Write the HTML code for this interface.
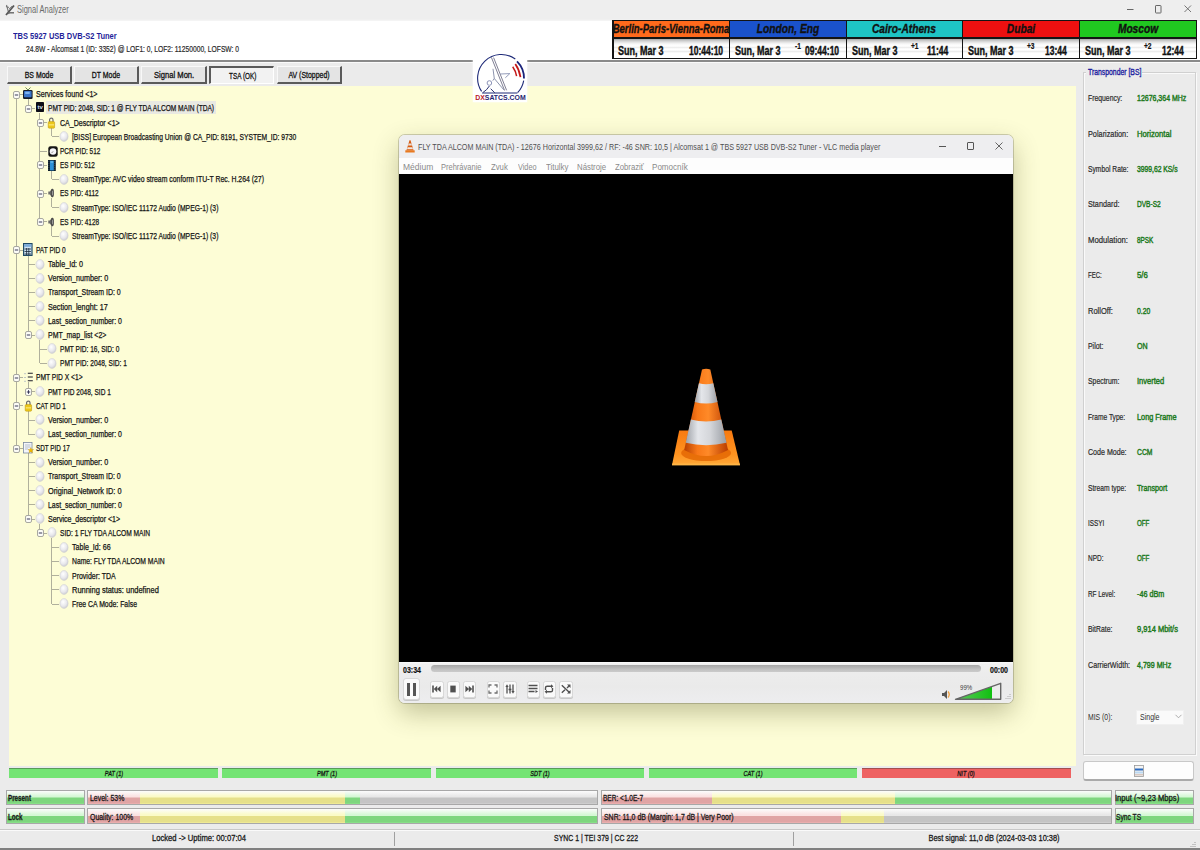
<!DOCTYPE html><html><head><meta charset="utf-8"><title>Signal Analyzer</title><style>

*{box-sizing:border-box;margin:0;padding:0}
html,body{width:1200px;height:850px;overflow:hidden;background:#ebebeb;font-family:"Liberation Sans",sans-serif;position:relative;color:#111}
.a{position:absolute}
.t{position:absolute;white-space:nowrap;transform-origin:0 0;line-height:1}
svg{position:absolute;overflow:visible}
#title{left:0;top:0;width:1200px;height:21px;background:linear-gradient(#eeeeee 0,#eeeeee 19px,#f6f6f6 21px)}
#hdr{left:0;top:21px;width:1200px;height:39px;background:#fff}
#hline{left:0;top:60px;width:1200px;height:2px;background:#8a8a8a}
#hwhite{left:0;top:62px;width:1200px;height:1px;background:#fafafa}
.btn{position:absolute;top:66px;height:17.5px;background:#e4e4e4;border-right:2px solid #5a5a5a;border-bottom:2px solid #5a5a5a;border-top:1px solid #f8f8f8;border-left:1px solid #f8f8f8}
.btn.sel{background:#f2f2f2;border-left:2px solid #5a5a5a;border-top:2px solid #5a5a5a;border-right:1px solid #fff;border-bottom:1px solid #fff}
.btn span{position:absolute;left:0;right:0;top:4px;text-align:center;font-size:9px;line-height:1;white-space:nowrap;transform:scaleX(.77);color:#111;-webkit-text-stroke:.3px #111}
#tree{left:9px;top:85.5px;width:1066.5px;height:680.5px;background:#fdfdd6}
.clkbox{position:absolute;left:612px;top:20px;width:584.5px;height:38.6px;background:#141414}
.clk{position:absolute;top:1px;height:36.6px;overflow:hidden}
.clk .h{position:absolute;left:0;top:0;right:0;height:16px}
.clk .h span{position:absolute;left:50%;top:2.3px;font:italic bold 12px "Liberation Sans",sans-serif;line-height:12px;transform-origin:50% 0;transform:translateX(-50%) scaleX(.85);white-space:nowrap;color:#111;-webkit-text-stroke:.35px #111}
.clk .d{position:absolute;left:0;top:17.5px;right:0;bottom:0;background:linear-gradient(#a8a8a8 0,#c8c8c8 1.5px,#e0e0e0 3px,#f8f8f8 5px,#fff 7px,#eee 8.5px,#fff 10px,#fff 11px,#ececec 12.5px,#fff 14px,#fff 100%)}
.clk .d span{position:absolute;top:6.6px;font:bold 12px "Liberation Sans",sans-serif;line-height:12px;transform-origin:0 0;white-space:nowrap;color:#111;-webkit-text-stroke:.4px #111}
.clk .d sup{position:absolute;top:3.4px;font:bold 8.5px "Liberation Sans",sans-serif;line-height:9px;transform-origin:0 0;transform:scaleX(.78);color:#111;-webkit-text-stroke:.2px #111}

</style></head><body>

<div id="title" class="a"></div>
<svg style="left:5px;top:2.5px" width="10" height="12" viewBox="0 0 10 12">
 <path d="M1.5 2 L4 11 M1 3.5 L4 4.5" stroke="#777" stroke-width="1.1" fill="none"/>
 <path d="M1 12 L9 2.5" stroke="#555" stroke-width="1.8" fill="none"/>
 <path d="M3 9.8 H9" stroke="#666" stroke-width="1.4" fill="none"/>
 <path d="M4 6 L7 3" stroke="#888" stroke-width="1" fill="none"/>
</svg>
<div class="t" style="left:17px;top:3.6px;font-size:10.5px;color:#6a6a6a;transform:scaleX(.715)">Signal Analyzer</div>
<svg style="left:1127px;top:8.5px" width="8" height="2"><rect x="0" y="0" width="6.5" height="1" fill="#666"/></svg>
<svg style="left:1155px;top:4.5px" width="8" height="9"><rect x="0.5" y="0.5" width="5.5" height="7.5" rx=".6" fill="none" stroke="#666" stroke-width="1"/></svg>
<svg style="left:1183.5px;top:4.5px" width="9" height="9"><path d="M0.5 0.5 L7 7 M7 0.5 L0.5 7" stroke="#666" stroke-width=".9" fill="none"/></svg>
<div id="hdr" class="a"></div>
<div class="t" style="left:13px;top:30.5px;font-size:9.5px;font-weight:bold;color:#1f1f9a;transform:scaleX(.79)">TBS 5927 USB DVB-S2 Tuner</div>
<div class="t" style="left:26px;top:45px;font-size:9px;color:#2a2a2a;transform:scaleX(.745);-webkit-text-stroke:.2px #2a2a2a">24.8W - Alcomsat 1 (ID: 3352) @ LOF1: 0, LOF2: 11250000, LOFSW: 0</div>
<div id="hline" class="a"></div>
<div id="hwhite" class="a"></div>
<div class="btn" style="left:7px;width:65px"><span>BS Mode</span></div>
<div class="btn" style="left:74px;width:65px"><span>DT Mode</span></div>
<div class="btn" style="left:141px;width:66px"><span style="transform:translateX(.6px) scaleX(.847)">Signal Mon.</span></div>
<div class="btn sel" style="left:209px;width:65px"><span style="top:3.8px;transform:translateX(.8px) scaleX(.71)">TSA (OK)</span></div>
<div class="btn" style="left:277px;width:65px"><span>AV (Stopped)</span></div>

<div class="clkbox">
<div class="clk" style="left:1.5px;width:115.0px"><div class="h" style="background:#ff6a1c"><span style="transform:translateX(-50%) scaleX(.79)">Berlin-Paris-Vienna-Roma</span></div><div class="d"><span style="left:4.5px;transform:scaleX(.75)">Sun, Mar 3</span><span style="left:75.5px;transform:scaleX(.71)">10:44:10</span></div></div>
<div class="clk" style="left:118.0px;width:115.5px"><div class="h" style="background:#1a52cc"><span>London, Eng</span></div><div class="d"><span style="left:4.5px;transform:scaleX(.75)">Sun, Mar 3</span><sup style="left:64.5px">-1</sup><span style="left:74.5px;transform:scaleX(.71)">09:44:10</span></div></div>
<div class="clk" style="left:235.0px;width:114.5px"><div class="h" style="background:#1ec4c4"><span>Cairo-Athens</span></div><div class="d"><span style="left:4.5px;transform:scaleX(.75)">Sun, Mar 3</span><sup style="left:63.5px">+1</sup><span style="left:80.0px;transform:scaleX(.71)">11:44</span></div></div>
<div class="clk" style="left:351.0px;width:115.5px"><div class="h" style="background:#ee1010"><span>Dubai</span></div><div class="d"><span style="left:4.5px;transform:scaleX(.75)">Sun, Mar 3</span><sup style="left:63.5px">+3</sup><span style="left:81.5px;transform:scaleX(.71)">13:44</span></div></div>
<div class="clk" style="left:468.0px;width:115.5px"><div class="h" style="background:#20c820"><span>Moscow</span></div><div class="d"><span style="left:4.5px;transform:scaleX(.75)">Sun, Mar 3</span><sup style="left:63.5px">+2</sup><span style="left:81.5px;transform:scaleX(.71)">12:44</span></div></div>
</div>
<div id="tree" class="a"></div>
<div class="a" style="left:1083px;top:72px;width:113px;height:683px;border:1px solid #d0d0d0;box-shadow:inset 1px 1px 0 #fafafa,1px 1px 0 #fafafa"></div>
<div class="a" style="left:1086px;top:67px;width:56px;height:10px;background:#ebebeb"></div>
<div class="t" style="left:1088px;top:67.7px;font-size:9px;color:#1c1ca0;transform:scaleX(.76);-webkit-text-stroke:.35px #1c1ca0">Transponder [BS]</div>
<div class="t" style="left:1088px;top:94.30px;font-size:9px;color:#2a2a2a;transform:scaleX(0.76);-webkit-text-stroke:.2px #2a2a2a">Frequency:</div>
<div class="t" style="left:1137px;top:94.30px;font-size:9px;color:#1d7a1d;transform:scaleX(0.776);-webkit-text-stroke:.45px #1d7a1d">12676,364 MHz</div>
<div class="t" style="left:1088px;top:129.69px;font-size:9px;color:#2a2a2a;transform:scaleX(0.812);-webkit-text-stroke:.2px #2a2a2a">Polarization:</div>
<div class="t" style="left:1137px;top:129.69px;font-size:9px;color:#1d7a1d;transform:scaleX(0.849);-webkit-text-stroke:.45px #1d7a1d">Horizontal</div>
<div class="t" style="left:1088px;top:165.08px;font-size:9px;color:#2a2a2a;transform:scaleX(0.747);-webkit-text-stroke:.2px #2a2a2a">Symbol Rate:</div>
<div class="t" style="left:1137px;top:165.08px;font-size:9px;color:#1d7a1d;transform:scaleX(0.752);-webkit-text-stroke:.45px #1d7a1d">3999,62 KS/s</div>
<div class="t" style="left:1088px;top:200.47px;font-size:9px;color:#2a2a2a;transform:scaleX(0.807);-webkit-text-stroke:.2px #2a2a2a">Standard:</div>
<div class="t" style="left:1137px;top:200.47px;font-size:9px;color:#1d7a1d;transform:scaleX(0.727);-webkit-text-stroke:.45px #1d7a1d">DVB-S2</div>
<div class="t" style="left:1088px;top:235.86px;font-size:9px;color:#2a2a2a;transform:scaleX(0.858);-webkit-text-stroke:.2px #2a2a2a">Modulation:</div>
<div class="t" style="left:1137px;top:235.86px;font-size:9px;color:#1d7a1d;transform:scaleX(0.71);-webkit-text-stroke:.45px #1d7a1d">8PSK</div>
<div class="t" style="left:1088px;top:271.25px;font-size:9px;color:#2a2a2a;transform:scaleX(0.669);-webkit-text-stroke:.2px #2a2a2a">FEC:</div>
<div class="t" style="left:1137px;top:271.25px;font-size:9px;color:#1d7a1d;transform:scaleX(0.862);-webkit-text-stroke:.45px #1d7a1d">5/6</div>
<div class="t" style="left:1088px;top:306.64px;font-size:9px;color:#2a2a2a;transform:scaleX(0.836);-webkit-text-stroke:.2px #2a2a2a">RollOff:</div>
<div class="t" style="left:1137px;top:306.64px;font-size:9px;color:#1d7a1d;transform:scaleX(0.754);-webkit-text-stroke:.45px #1d7a1d">0.20</div>
<div class="t" style="left:1088px;top:342.03px;font-size:9px;color:#2a2a2a;transform:scaleX(0.77);-webkit-text-stroke:.2px #2a2a2a">Pilot:</div>
<div class="t" style="left:1137px;top:342.03px;font-size:9px;color:#1d7a1d;transform:scaleX(0.785);-webkit-text-stroke:.45px #1d7a1d">ON</div>
<div class="t" style="left:1088px;top:377.42px;font-size:9px;color:#2a2a2a;transform:scaleX(0.765);-webkit-text-stroke:.2px #2a2a2a">Spectrum:</div>
<div class="t" style="left:1137px;top:377.42px;font-size:9px;color:#1d7a1d;transform:scaleX(0.835);-webkit-text-stroke:.45px #1d7a1d">Inverted</div>
<div class="t" style="left:1088px;top:412.81px;font-size:9px;color:#2a2a2a;transform:scaleX(0.738);-webkit-text-stroke:.2px #2a2a2a">Frame Type:</div>
<div class="t" style="left:1137px;top:412.81px;font-size:9px;color:#1d7a1d;transform:scaleX(0.814);-webkit-text-stroke:.45px #1d7a1d">Long Frame</div>
<div class="t" style="left:1088px;top:448.20px;font-size:9px;color:#2a2a2a;transform:scaleX(0.787);-webkit-text-stroke:.2px #2a2a2a">Code Mode:</div>
<div class="t" style="left:1137px;top:448.20px;font-size:9px;color:#1d7a1d;transform:scaleX(0.751);-webkit-text-stroke:.45px #1d7a1d">CCM</div>
<div class="t" style="left:1088px;top:483.59px;font-size:9px;color:#2a2a2a;transform:scaleX(0.746);-webkit-text-stroke:.2px #2a2a2a">Stream type:</div>
<div class="t" style="left:1137px;top:483.59px;font-size:9px;color:#1d7a1d;transform:scaleX(0.793);-webkit-text-stroke:.45px #1d7a1d">Transport</div>
<div class="t" style="left:1088px;top:518.98px;font-size:9px;color:#2a2a2a;transform:scaleX(0.709);-webkit-text-stroke:.2px #2a2a2a">ISSYI</div>
<div class="t" style="left:1137px;top:518.98px;font-size:9px;color:#1d7a1d;transform:scaleX(0.688);-webkit-text-stroke:.45px #1d7a1d">OFF</div>
<div class="t" style="left:1088px;top:554.37px;font-size:9px;color:#2a2a2a;transform:scaleX(0.722);-webkit-text-stroke:.2px #2a2a2a">NPD:</div>
<div class="t" style="left:1137px;top:554.37px;font-size:9px;color:#1d7a1d;transform:scaleX(0.688);-webkit-text-stroke:.45px #1d7a1d">OFF</div>
<div class="t" style="left:1088px;top:589.76px;font-size:9px;color:#2a2a2a;transform:scaleX(0.708);-webkit-text-stroke:.2px #2a2a2a">RF Level:</div>
<div class="t" style="left:1137px;top:589.76px;font-size:9px;color:#1d7a1d;transform:scaleX(0.802);-webkit-text-stroke:.45px #1d7a1d">-46 dBm</div>
<div class="t" style="left:1088px;top:625.15px;font-size:9px;color:#2a2a2a;transform:scaleX(0.76);-webkit-text-stroke:.2px #2a2a2a">BitRate:</div>
<div class="t" style="left:1137px;top:625.15px;font-size:9px;color:#1d7a1d;transform:scaleX(0.835);-webkit-text-stroke:.45px #1d7a1d">9,914 Mbit/s</div>
<div class="t" style="left:1088px;top:660.54px;font-size:9px;color:#2a2a2a;transform:scaleX(0.794);-webkit-text-stroke:.2px #2a2a2a">CarrierWidth:</div>
<div class="t" style="left:1137px;top:660.54px;font-size:9px;color:#1d7a1d;transform:scaleX(0.786);-webkit-text-stroke:.45px #1d7a1d">4,799 MHz</div>
<div class="t" style="left:1088px;top:712.5px;font-size:9px;color:#303030;transform:scaleX(.76)">MIS (0):</div>
<div class="a" style="left:1136px;top:709.5px;width:47.5px;height:15px;background:#fafafa;border:1px solid #f0f0f0"></div>
<div class="t" style="left:1139.5px;top:712.5px;font-size:9px;color:#333;transform:scaleX(.78)">Single</div>
<svg style="left:1175px;top:714px" width="7" height="5" viewBox="0 0 7 5"><path d="M0.5 0.8 L3.5 3.8 L6.5 0.8" stroke="#999" stroke-width=".8" fill="none"/></svg>
<div class="a" style="left:1082.5px;top:761px;width:111.5px;height:20px;background:#fdfdfd;border:1px solid #c8c8c8;border-bottom:2px solid #aaa;border-radius:3px"></div>
<svg style="left:1134px;top:765px" width="10" height="12" viewBox="0 0 10 12"><rect x=".5" y=".5" width="9" height="11" fill="#f4f4f4" stroke="#999" stroke-width=".8"/><rect x="1" y="3.5" width="8" height="2" fill="#2a6ac0"/><rect x="1" y="6.5" width="8" height="2" fill="#bcd8f0"/><rect x="1" y="9" width="8" height="1.5" fill="#d8c8c0"/></svg>
<div class="a" style="left:9px;top:768px;width:209px;height:10px;background:#74e474;border-top:1px solid #5a9a5a"></div>
<div class="t" style="left:113.5px;top:770.3px;font-size:7.5px;font-style:italic;color:#111;transform-origin:50% 0;transform:translateX(-50%) scaleX(.74);-webkit-text-stroke:.3px #111">PAT (1)</div>
<div class="a" style="left:222px;top:768px;width:209px;height:10px;background:#74e474;border-top:1px solid #5a9a5a"></div>
<div class="t" style="left:326.5px;top:770.3px;font-size:7.5px;font-style:italic;color:#111;transform-origin:50% 0;transform:translateX(-50%) scaleX(.74);-webkit-text-stroke:.3px #111">PMT (1)</div>
<div class="a" style="left:436px;top:768px;width:208px;height:10px;background:#74e474;border-top:1px solid #5a9a5a"></div>
<div class="t" style="left:540.0px;top:770.3px;font-size:7.5px;font-style:italic;color:#111;transform-origin:50% 0;transform:translateX(-50%) scaleX(.74);-webkit-text-stroke:.3px #111">SDT (1)</div>
<div class="a" style="left:649px;top:768px;width:208px;height:10px;background:#74e474;border-top:1px solid #5a9a5a"></div>
<div class="t" style="left:753.0px;top:770.3px;font-size:7.5px;font-style:italic;color:#111;transform-origin:50% 0;transform:translateX(-50%) scaleX(.74);-webkit-text-stroke:.3px #111">CAT (1)</div>
<div class="a" style="left:862px;top:768px;width:208.5px;height:10px;background:#ee6262;border-top:1px solid #a05050"></div>
<div class="t" style="left:966.25px;top:770.3px;font-size:7.5px;font-style:italic;color:#111;transform-origin:50% 0;transform:translateX(-50%) scaleX(.74);-webkit-text-stroke:.3px #111">NIT (0)</div>
<div class="a" style="left:6px;top:789.5px;width:78.5px;height:15.0px;border:1px solid #a8a8a8;background:#ddd;overflow:hidden">
<div class="a" style="left:0px;top:0;width:78.5px;height:100%;background:linear-gradient(#fcfcfc 0,#d6f8d6 40%,#d6f8d6 47%,#7ed67e 53%,#7ed67e 90%,#8ce48c 100%)"></div>
</div>
<div class="t" style="left:8px;top:794.2px;font-size:9px;font-weight:bold;color:#1a1a1a;transform:scaleX(0.696);-webkit-text-stroke:.3px #1a1a1a">Present</div>
<div class="a" style="left:6px;top:808px;width:78.5px;height:15.5px;border:1px solid #a8a8a8;background:#ddd;overflow:hidden">
<div class="a" style="left:0px;top:0;width:78.5px;height:100%;background:linear-gradient(#fcfcfc 0,#d6f8d6 40%,#d6f8d6 47%,#7ed67e 53%,#7ed67e 90%,#8ce48c 100%)"></div>
</div>
<div class="t" style="left:8px;top:813.0px;font-size:9px;font-weight:bold;color:#1a1a1a;transform:scaleX(0.693);-webkit-text-stroke:.3px #1a1a1a">Lock</div>
<div class="a" style="left:87px;top:789.5px;width:511px;height:15.0px;border:1px solid #a8a8a8;background:#ddd;overflow:hidden">
<div class="a" style="left:0px;top:0;width:52px;height:100%;background:linear-gradient(#fcfcfc 0,#fbe2e2 40%,#fbe2e2 47%,#e0a4a4 53%,#e0a4a4 90%,#eeb2b2 100%)"></div>
<div class="a" style="left:52px;top:0;width:204.5px;height:100%;background:linear-gradient(#fcfcfc 0,#fbfbc8 40%,#fbfbc8 47%,#e6e08a 53%,#e6e08a 90%,#f4ee98 100%)"></div>
<div class="a" style="left:256.5px;top:0;width:15.5px;height:100%;background:linear-gradient(#fcfcfc 0,#d6f8d6 40%,#d6f8d6 47%,#7ed67e 53%,#7ed67e 90%,#8ce48c 100%)"></div>
<div class="a" style="left:272.0px;top:0;width:239.0px;height:100%;background:linear-gradient(#fcfcfc 0,#e8e8e8 40%,#e8e8e8 47%,#c4c4c4 53%,#c4c4c4 90%,#d2d2d2 100%)"></div>
</div>
<div class="t" style="left:90px;top:794.2px;font-size:9px;color:#1a1a1a;transform:scaleX(0.77);-webkit-text-stroke:.3px #1a1a1a">Level: 53%</div>
<div class="a" style="left:87px;top:808px;width:511px;height:15.5px;border:1px solid #a8a8a8;background:#ddd;overflow:hidden">
<div class="a" style="left:0px;top:0;width:52px;height:100%;background:linear-gradient(#fcfcfc 0,#fbe2e2 40%,#fbe2e2 47%,#e0a4a4 53%,#e0a4a4 90%,#eeb2b2 100%)"></div>
<div class="a" style="left:52px;top:0;width:204.5px;height:100%;background:linear-gradient(#fcfcfc 0,#fbfbc8 40%,#fbfbc8 47%,#e6e08a 53%,#e6e08a 90%,#f4ee98 100%)"></div>
<div class="a" style="left:256.5px;top:0;width:254.5px;height:100%;background:linear-gradient(#fcfcfc 0,#d6f8d6 40%,#d6f8d6 47%,#7ed67e 53%,#7ed67e 90%,#8ce48c 100%)"></div>
</div>
<div class="t" style="left:90px;top:813.0px;font-size:9px;color:#1a1a1a;transform:scaleX(0.77);-webkit-text-stroke:.3px #1a1a1a">Quality: 100%</div>
<div class="a" style="left:601px;top:789.5px;width:510.5px;height:15.0px;border:1px solid #a8a8a8;background:#ddd;overflow:hidden">
<div class="a" style="left:0px;top:0;width:110px;height:100%;background:linear-gradient(#fcfcfc 0,#fbe2e2 40%,#fbe2e2 47%,#e0a4a4 53%,#e0a4a4 90%,#eeb2b2 100%)"></div>
<div class="a" style="left:110px;top:0;width:182.5px;height:100%;background:linear-gradient(#fcfcfc 0,#fbfbc8 40%,#fbfbc8 47%,#e6e08a 53%,#e6e08a 90%,#f4ee98 100%)"></div>
<div class="a" style="left:292.5px;top:0;width:218.0px;height:100%;background:linear-gradient(#fcfcfc 0,#d6f8d6 40%,#d6f8d6 47%,#7ed67e 53%,#7ed67e 90%,#8ce48c 100%)"></div>
</div>
<div class="t" style="left:602.5px;top:794.2px;font-size:9px;color:#1a1a1a;transform:scaleX(0.727);-webkit-text-stroke:.3px #1a1a1a">BER: &lt;1.0E-7</div>
<div class="a" style="left:601px;top:808px;width:510.5px;height:15.5px;border:1px solid #a8a8a8;background:#ddd;overflow:hidden">
<div class="a" style="left:0px;top:0;width:239px;height:100%;background:linear-gradient(#fcfcfc 0,#fbe2e2 40%,#fbe2e2 47%,#e0a4a4 53%,#e0a4a4 90%,#eeb2b2 100%)"></div>
<div class="a" style="left:239px;top:0;width:43px;height:100%;background:linear-gradient(#fcfcfc 0,#fbfbc8 40%,#fbfbc8 47%,#e6e08a 53%,#e6e08a 90%,#f4ee98 100%)"></div>
<div class="a" style="left:282px;top:0;width:228.5px;height:100%;background:linear-gradient(#fcfcfc 0,#e8e8e8 40%,#e8e8e8 47%,#c4c4c4 53%,#c4c4c4 90%,#d2d2d2 100%)"></div>
</div>
<div class="t" style="left:604px;top:813.0px;font-size:9px;color:#1a1a1a;transform:scaleX(0.77);-webkit-text-stroke:.3px #1a1a1a">SNR: 11,0 dB (Margin: 1,7 dB | Very Poor)</div>
<div class="a" style="left:1115px;top:789.5px;width:79px;height:15.0px;border:1px solid #a8a8a8;background:#ddd;overflow:hidden">
<div class="a" style="left:0px;top:0;width:79px;height:100%;background:linear-gradient(#fcfcfc 0,#d6f8d6 40%,#d6f8d6 47%,#7ed67e 53%,#7ed67e 90%,#8ce48c 100%)"></div>
</div>
<div class="t" style="left:1115px;top:794.2px;font-size:9px;color:#1a1a1a;transform:scaleX(0.847);-webkit-text-stroke:.3px #1a1a1a">Input (~9,23 Mbps)</div>
<div class="a" style="left:1115px;top:808px;width:79px;height:15.5px;border:1px solid #a8a8a8;background:#ddd;overflow:hidden">
<div class="a" style="left:0px;top:0;width:79px;height:100%;background:linear-gradient(#fcfcfc 0,#d6f8d6 40%,#d6f8d6 47%,#7ed67e 53%,#7ed67e 90%,#8ce48c 100%)"></div>
</div>
<div class="t" style="left:1115.8px;top:813.0px;font-size:9px;color:#1a1a1a;transform:scaleX(0.742);-webkit-text-stroke:.3px #1a1a1a">Sync TS</div>
<div class="a" style="left:0;top:829px;width:1200px;height:1px;background:#c8c8c8"></div>
<div class="a" style="left:0;top:830px;width:1200px;height:1px;background:#fafafa"></div>
<div class="a" style="left:394px;top:832px;width:1px;height:14px;background:#a0a0a0"></div>
<div class="a" style="left:793px;top:832px;width:1px;height:14px;background:#a0a0a0"></div>
<div class="t" style="left:198.7px;top:834px;font-size:9px;color:#1a1a1a;transform-origin:50% 0;transform:translateX(-50%) scaleX(.85);-webkit-text-stroke:.3px #1a1a1a">Locked -&gt; Uptime: 00:07:04</div>
<div class="t" style="left:595.6px;top:834px;font-size:9px;color:#1a1a1a;transform-origin:50% 0;transform:translateX(-50%) scaleX(.77);-webkit-text-stroke:.3px #1a1a1a">SYNC 1 | TEI 379 | CC 222</div>
<div class="t" style="left:993.5px;top:834px;font-size:9px;color:#1a1a1a;transform-origin:50% 0;transform:translateX(-50%) scaleX(.825);-webkit-text-stroke:.3px #1a1a1a">Best signal: 11,0 dB (2024-03-03 10:38)</div>
<svg style="left:1189px;top:840px" width="8" height="8" viewBox="0 0 8 8"><path d="M6 2 V3 M4 4 V5 M6 4 V5 M2 6 V7 M4 6 V7 M6 6 V7" stroke="#999" stroke-width="1"/></svg>
<div class="a" style="left:0;top:848px;width:1200px;height:2px;background:#808080"></div>
<svg style="left:0;top:0" width="0" height="0"><defs><radialGradient id="gball" cx=".4" cy=".35" r=".7"><stop offset="0" stop-color="#ffffff"/><stop offset=".6" stop-color="#e8e8ec"/><stop offset="1" stop-color="#c9c9cf"/></radialGradient></defs></svg>
<div class="a" style="left:46px;top:100.85px;width:170px;height:13px;background:#e9e9e2"></div>
<div class="a" style="left:16.2px;top:94.00px;width:7px;height:1px;background:#b0b09c"></div>
<div class="a" style="left:27.6px;top:99.00px;width:1px;height:9.15px;background:#b0b09c"></div>
<div class="a" style="left:28.1px;top:108.15px;width:7px;height:1px;background:#b0b09c"></div>
<div class="a" style="left:39.4px;top:113.15px;width:1px;height:9.15px;background:#b0b09c"></div>
<div class="a" style="left:39.9px;top:122.31px;width:7px;height:1px;background:#b0b09c"></div>
<div class="a" style="left:51.3px;top:127.31px;width:1px;height:9.15px;background:#b0b09c"></div>
<div class="a" style="left:51.8px;top:136.46px;width:7px;height:1px;background:#b0b09c"></div>
<div class="a" style="left:39.4px;top:122.31px;width:1px;height:28.31px;background:#b0b09c"></div>
<div class="a" style="left:39.9px;top:150.61px;width:7px;height:1px;background:#b0b09c"></div>
<div class="a" style="left:39.4px;top:150.61px;width:1px;height:14.15px;background:#b0b09c"></div>
<div class="a" style="left:39.9px;top:164.76px;width:7px;height:1px;background:#b0b09c"></div>
<div class="a" style="left:51.3px;top:169.76px;width:1px;height:9.15px;background:#b0b09c"></div>
<div class="a" style="left:51.8px;top:178.92px;width:7px;height:1px;background:#b0b09c"></div>
<div class="a" style="left:39.4px;top:164.76px;width:1px;height:28.31px;background:#b0b09c"></div>
<div class="a" style="left:39.9px;top:193.07px;width:7px;height:1px;background:#b0b09c"></div>
<div class="a" style="left:51.3px;top:198.07px;width:1px;height:9.15px;background:#b0b09c"></div>
<div class="a" style="left:51.8px;top:207.22px;width:7px;height:1px;background:#b0b09c"></div>
<div class="a" style="left:39.4px;top:193.07px;width:1px;height:28.31px;background:#b0b09c"></div>
<div class="a" style="left:39.9px;top:221.38px;width:7px;height:1px;background:#b0b09c"></div>
<div class="a" style="left:51.3px;top:226.38px;width:1px;height:9.15px;background:#b0b09c"></div>
<div class="a" style="left:51.8px;top:235.53px;width:7px;height:1px;background:#b0b09c"></div>
<div class="a" style="left:15.7px;top:94.00px;width:1px;height:155.68px;background:#b0b09c"></div>
<div class="a" style="left:16.2px;top:249.68px;width:7px;height:1px;background:#b0b09c"></div>
<div class="a" style="left:27.6px;top:254.68px;width:1px;height:9.15px;background:#b0b09c"></div>
<div class="a" style="left:28.1px;top:263.84px;width:7px;height:1px;background:#b0b09c"></div>
<div class="a" style="left:27.6px;top:263.84px;width:1px;height:14.15px;background:#b0b09c"></div>
<div class="a" style="left:28.1px;top:277.99px;width:7px;height:1px;background:#b0b09c"></div>
<div class="a" style="left:27.6px;top:277.99px;width:1px;height:14.15px;background:#b0b09c"></div>
<div class="a" style="left:28.1px;top:292.14px;width:7px;height:1px;background:#b0b09c"></div>
<div class="a" style="left:27.6px;top:292.14px;width:1px;height:14.15px;background:#b0b09c"></div>
<div class="a" style="left:28.1px;top:306.30px;width:7px;height:1px;background:#b0b09c"></div>
<div class="a" style="left:27.6px;top:306.30px;width:1px;height:14.15px;background:#b0b09c"></div>
<div class="a" style="left:28.1px;top:320.45px;width:7px;height:1px;background:#b0b09c"></div>
<div class="a" style="left:27.6px;top:320.45px;width:1px;height:14.15px;background:#b0b09c"></div>
<div class="a" style="left:28.1px;top:334.60px;width:7px;height:1px;background:#b0b09c"></div>
<div class="a" style="left:39.4px;top:339.60px;width:1px;height:9.15px;background:#b0b09c"></div>
<div class="a" style="left:39.9px;top:348.75px;width:7px;height:1px;background:#b0b09c"></div>
<div class="a" style="left:39.4px;top:348.75px;width:1px;height:14.15px;background:#b0b09c"></div>
<div class="a" style="left:39.9px;top:362.91px;width:7px;height:1px;background:#b0b09c"></div>
<div class="a" style="left:15.7px;top:249.68px;width:1px;height:127.38px;background:#b0b09c"></div>
<div class="a" style="left:16.2px;top:377.06px;width:7px;height:1px;background:#b0b09c"></div>
<div class="a" style="left:27.6px;top:382.06px;width:1px;height:9.15px;background:#b0b09c"></div>
<div class="a" style="left:28.1px;top:391.21px;width:7px;height:1px;background:#b0b09c"></div>
<div class="a" style="left:15.7px;top:377.06px;width:1px;height:28.31px;background:#b0b09c"></div>
<div class="a" style="left:16.2px;top:405.37px;width:7px;height:1px;background:#b0b09c"></div>
<div class="a" style="left:27.6px;top:410.37px;width:1px;height:9.15px;background:#b0b09c"></div>
<div class="a" style="left:28.1px;top:419.52px;width:7px;height:1px;background:#b0b09c"></div>
<div class="a" style="left:27.6px;top:419.52px;width:1px;height:14.15px;background:#b0b09c"></div>
<div class="a" style="left:28.1px;top:433.67px;width:7px;height:1px;background:#b0b09c"></div>
<div class="a" style="left:15.7px;top:405.37px;width:1px;height:42.46px;background:#b0b09c"></div>
<div class="a" style="left:16.2px;top:447.82px;width:7px;height:1px;background:#b0b09c"></div>
<div class="a" style="left:27.6px;top:452.82px;width:1px;height:9.15px;background:#b0b09c"></div>
<div class="a" style="left:28.1px;top:461.98px;width:7px;height:1px;background:#b0b09c"></div>
<div class="a" style="left:27.6px;top:461.98px;width:1px;height:14.15px;background:#b0b09c"></div>
<div class="a" style="left:28.1px;top:476.13px;width:7px;height:1px;background:#b0b09c"></div>
<div class="a" style="left:27.6px;top:476.13px;width:1px;height:14.15px;background:#b0b09c"></div>
<div class="a" style="left:28.1px;top:490.28px;width:7px;height:1px;background:#b0b09c"></div>
<div class="a" style="left:27.6px;top:490.28px;width:1px;height:14.15px;background:#b0b09c"></div>
<div class="a" style="left:28.1px;top:504.44px;width:7px;height:1px;background:#b0b09c"></div>
<div class="a" style="left:27.6px;top:504.44px;width:1px;height:14.15px;background:#b0b09c"></div>
<div class="a" style="left:28.1px;top:518.59px;width:7px;height:1px;background:#b0b09c"></div>
<div class="a" style="left:39.4px;top:523.59px;width:1px;height:9.15px;background:#b0b09c"></div>
<div class="a" style="left:39.9px;top:532.74px;width:7px;height:1px;background:#b0b09c"></div>
<div class="a" style="left:51.3px;top:537.74px;width:1px;height:9.15px;background:#b0b09c"></div>
<div class="a" style="left:51.8px;top:546.90px;width:7px;height:1px;background:#b0b09c"></div>
<div class="a" style="left:51.3px;top:546.90px;width:1px;height:14.15px;background:#b0b09c"></div>
<div class="a" style="left:51.8px;top:561.05px;width:7px;height:1px;background:#b0b09c"></div>
<div class="a" style="left:51.3px;top:561.05px;width:1px;height:14.15px;background:#b0b09c"></div>
<div class="a" style="left:51.8px;top:575.20px;width:7px;height:1px;background:#b0b09c"></div>
<div class="a" style="left:51.3px;top:575.20px;width:1px;height:14.15px;background:#b0b09c"></div>
<div class="a" style="left:51.8px;top:589.36px;width:7px;height:1px;background:#b0b09c"></div>
<div class="a" style="left:51.3px;top:589.36px;width:1px;height:14.15px;background:#b0b09c"></div>
<div class="a" style="left:51.8px;top:603.51px;width:7px;height:1px;background:#b0b09c"></div>
<svg style="left:13.10px;top:90.70px" width="7" height="8" viewBox="0 0 7 8"><rect x="0.5" y="0.5" width="6" height="7" rx="1.5" fill="#fbfbf6" stroke="#a8a8a0" stroke-width="1"/><path d="M1.8 4 H5.2" stroke="#3a3a5a" stroke-width="1"/></svg>
<svg style="left:23.4px;top:87.00px" width="10" height="12" viewBox="0 0 10 12"><path d="M2.5 0.5 L5 3 L7.5 0.5" stroke="#5a7a4a" stroke-width=".9" fill="none"/><rect x="0" y="3" width="9.6" height="9" rx="1.2" fill="#161c2a"/><rect x="1" y="4" width="7.6" height="6.2" rx=".8" fill="#3a74c8"/><rect x="2.2" y="4.8" width="4.5" height="2.2" fill="#80b4f0"/></svg>
<div class="t" style="left:36.10px;top:90.30px;font-size:8.5px;color:#151515;transform:scaleX(0.84);-webkit-text-stroke:.25px #151515">Services found &lt;1&gt;</div>
<svg style="left:24.97px;top:104.85px" width="7" height="8" viewBox="0 0 7 8"><rect x="0.5" y="0.5" width="6" height="7" rx="1.5" fill="#fbfbf6" stroke="#a8a8a0" stroke-width="1"/><path d="M1.8 4 H5.2" stroke="#3a3a5a" stroke-width="1"/></svg>
<svg style="left:36.07px;top:102.35px" width="9" height="10" viewBox="0 0 9 10"><rect x="0" y="0" width="8" height="10" rx=".8" fill="#0d0d18"/><text x="1.4" y="7.4" font-family="Liberation Sans" font-size="6" font-weight="bold" fill="#dfe8f5">tv</text></svg>
<div class="t" style="left:47.97px;top:104.45px;font-size:8.5px;color:#151515;transform:scaleX(0.776);-webkit-text-stroke:.25px #151515">PMT PID: 2048, SID: 1 @ FLY TDA ALCOM MAIN (TDA)</div>
<svg style="left:36.84px;top:119.01px" width="7" height="8" viewBox="0 0 7 8"><rect x="0.5" y="0.5" width="6" height="7" rx="1.5" fill="#fbfbf6" stroke="#a8a8a0" stroke-width="1"/><path d="M1.8 4 H5.2" stroke="#3a3a5a" stroke-width="1"/></svg>
<svg style="left:48.44px;top:116.51px" width="8" height="12" viewBox="0 0 8 12"><path d="M1.6 5 V2.8 A1.7 1.7 0 0 1 5 2.8 V5" stroke="#6a6a70" stroke-width="1.2" fill="none"/><rect x="0.2" y="4.6" width="6.4" height="6.6" rx="1" fill="#ecc81a" stroke="#b89010" stroke-width=".5"/><rect x="0.8" y="7" width="5.2" height="1.6" fill="#f8e060"/></svg>
<div class="t" style="left:59.84px;top:118.61px;font-size:8.5px;color:#151515;transform:scaleX(0.826);-webkit-text-stroke:.25px #151515">CA_Descriptor &lt;1&gt;</div>
<svg style="left:58.81px;top:131.16px" width="10" height="11" viewBox="0 0 10 11"><ellipse cx="5" cy="5.5" rx="4.1" ry="4.9" fill="url(#gball)" stroke="#c8c8d0" stroke-width=".5"/></svg>
<div class="t" style="left:71.71px;top:132.76px;font-size:8.5px;color:#151515;transform:scaleX(0.789);-webkit-text-stroke:.25px #151515">[BISS] European Broadcasting Union @ CA_PID: 8191, SYSTEM_ID: 9730</div>
<svg style="left:47.94px;top:145.61px" width="10" height="11" viewBox="0 0 10 11"><rect x="0.3" y="0.3" width="9.4" height="10.4" rx="2.2" fill="#151515"/><circle cx="5" cy="5.5" r="3.3" fill="#f4f4f8"/><path d="M5 5.5 L3.8 6.8" stroke="#333" stroke-width=".7"/></svg>
<div class="t" style="left:59.84px;top:146.91px;font-size:8.5px;color:#151515;transform:scaleX(0.755);-webkit-text-stroke:.25px #151515">PCR PID: 512</div>
<svg style="left:36.84px;top:161.46px" width="7" height="8" viewBox="0 0 7 8"><rect x="0.5" y="0.5" width="6" height="7" rx="1.5" fill="#fbfbf6" stroke="#a8a8a0" stroke-width="1"/><path d="M1.8 4 H5.2" stroke="#3a3a5a" stroke-width="1"/></svg>
<svg style="left:47.94px;top:159.76px" width="8" height="11" viewBox="0 0 8 11"><rect x="0" y="0" width="7.8" height="11" fill="#0e1e2a"/><rect x="2" y="0.6" width="3.8" height="9.8" fill="#2a90d8"/><path d="M2.5 2 H5.3" stroke="#a0e0ff" stroke-width=".8"/><path d="M0.9 1 V10 M6.9 1 V10" stroke="#5a6a7a" stroke-width=".6" stroke-dasharray="1 1"/></svg>
<div class="t" style="left:59.84px;top:161.06px;font-size:8.5px;color:#151515;transform:scaleX(0.745);-webkit-text-stroke:.25px #151515">ES PID: 512</div>
<svg style="left:58.81px;top:173.62px" width="10" height="11" viewBox="0 0 10 11"><ellipse cx="5" cy="5.5" rx="4.1" ry="4.9" fill="url(#gball)" stroke="#c8c8d0" stroke-width=".5"/></svg>
<div class="t" style="left:71.71px;top:175.22px;font-size:8.5px;color:#151515;transform:scaleX(0.809);-webkit-text-stroke:.25px #151515">StreamType: AVC video stream conform ITU-T Rec. H.264 (27)</div>
<svg style="left:36.84px;top:189.77px" width="7" height="8" viewBox="0 0 7 8"><rect x="0.5" y="0.5" width="6" height="7" rx="1.5" fill="#fbfbf6" stroke="#a8a8a0" stroke-width="1"/><path d="M1.8 4 H5.2" stroke="#3a3a5a" stroke-width="1"/></svg>
<svg style="left:48.44px;top:188.37px" width="7" height="10" viewBox="0 0 7 10"><path d="M0.3 3.6 H1.8 L4.2 0.6 V9.4 L1.8 6.4 H0.3 Z" fill="#6a6a6a"/><ellipse cx="4.4" cy="5" rx="1.6" ry="4.3" fill="#4a4a4a"/><ellipse cx="4.6" cy="5" rx=".7" ry="2.5" fill="#9a9a9a"/></svg>
<div class="t" style="left:59.84px;top:189.37px;font-size:8.5px;color:#151515;transform:scaleX(0.76);-webkit-text-stroke:.25px #151515">ES PID: 4112</div>
<svg style="left:58.81px;top:201.92px" width="10" height="11" viewBox="0 0 10 11"><ellipse cx="5" cy="5.5" rx="4.1" ry="4.9" fill="url(#gball)" stroke="#c8c8d0" stroke-width=".5"/></svg>
<div class="t" style="left:71.71px;top:203.52px;font-size:8.5px;color:#151515;transform:scaleX(0.798);-webkit-text-stroke:.25px #151515">StreamType: ISO/IEC 11172 Audio (MPEG-1) (3)</div>
<svg style="left:36.84px;top:218.08px" width="7" height="8" viewBox="0 0 7 8"><rect x="0.5" y="0.5" width="6" height="7" rx="1.5" fill="#fbfbf6" stroke="#a8a8a0" stroke-width="1"/><path d="M1.8 4 H5.2" stroke="#3a3a5a" stroke-width="1"/></svg>
<svg style="left:48.44px;top:216.68px" width="7" height="10" viewBox="0 0 7 10"><path d="M0.3 3.6 H1.8 L4.2 0.6 V9.4 L1.8 6.4 H0.3 Z" fill="#6a6a6a"/><ellipse cx="4.4" cy="5" rx="1.6" ry="4.3" fill="#4a4a4a"/><ellipse cx="4.6" cy="5" rx=".7" ry="2.5" fill="#9a9a9a"/></svg>
<div class="t" style="left:59.84px;top:217.68px;font-size:8.5px;color:#151515;transform:scaleX(0.76);-webkit-text-stroke:.25px #151515">ES PID: 4128</div>
<svg style="left:58.81px;top:230.23px" width="10" height="11" viewBox="0 0 10 11"><ellipse cx="5" cy="5.5" rx="4.1" ry="4.9" fill="url(#gball)" stroke="#c8c8d0" stroke-width=".5"/></svg>
<div class="t" style="left:71.71px;top:231.83px;font-size:8.5px;color:#151515;transform:scaleX(0.798);-webkit-text-stroke:.25px #151515">StreamType: ISO/IEC 11172 Audio (MPEG-1) (3)</div>
<svg style="left:13.10px;top:246.38px" width="7" height="8" viewBox="0 0 7 8"><rect x="0.5" y="0.5" width="6" height="7" rx="1.5" fill="#fbfbf6" stroke="#a8a8a0" stroke-width="1"/><path d="M1.8 4 H5.2" stroke="#3a3a5a" stroke-width="1"/></svg>
<svg style="left:23.2px;top:243.18px" width="10" height="13" viewBox="0 0 10 13"><rect x="0.6" y="0.6" width="8.4" height="11.8" fill="#cfe4f6" stroke="#1f4a66" stroke-width="1.2"/><rect x="1.2" y="1.2" width="7.2" height="2.6" fill="#7aaad8"/><path d="M1.5 6 H8 M1.5 8.5 H8 M1.5 11 H8 M3.6 5 V12 M5.8 5 V12" stroke="#1a2a3a" stroke-width=".8"/></svg>
<div class="t" style="left:36.10px;top:245.98px;font-size:8.5px;color:#151515;transform:scaleX(0.767);-webkit-text-stroke:.25px #151515">PAT PID 0</div>
<svg style="left:35.07px;top:258.54px" width="10" height="11" viewBox="0 0 10 11"><ellipse cx="5" cy="5.5" rx="4.1" ry="4.9" fill="url(#gball)" stroke="#c8c8d0" stroke-width=".5"/></svg>
<div class="t" style="left:47.97px;top:260.14px;font-size:8.5px;color:#151515;transform:scaleX(0.844);-webkit-text-stroke:.25px #151515">Table_Id: 0</div>
<svg style="left:35.07px;top:272.69px" width="10" height="11" viewBox="0 0 10 11"><ellipse cx="5" cy="5.5" rx="4.1" ry="4.9" fill="url(#gball)" stroke="#c8c8d0" stroke-width=".5"/></svg>
<div class="t" style="left:47.97px;top:274.29px;font-size:8.5px;color:#151515;transform:scaleX(0.845);-webkit-text-stroke:.25px #151515">Version_number: 0</div>
<svg style="left:35.07px;top:286.84px" width="10" height="11" viewBox="0 0 10 11"><ellipse cx="5" cy="5.5" rx="4.1" ry="4.9" fill="url(#gball)" stroke="#c8c8d0" stroke-width=".5"/></svg>
<div class="t" style="left:47.97px;top:288.44px;font-size:8.5px;color:#151515;transform:scaleX(0.822);-webkit-text-stroke:.25px #151515">Transport_Stream ID: 0</div>
<svg style="left:35.07px;top:301.00px" width="10" height="11" viewBox="0 0 10 11"><ellipse cx="5" cy="5.5" rx="4.1" ry="4.9" fill="url(#gball)" stroke="#c8c8d0" stroke-width=".5"/></svg>
<div class="t" style="left:47.97px;top:302.60px;font-size:8.5px;color:#151515;transform:scaleX(0.847);-webkit-text-stroke:.25px #151515">Section_lenght: 17</div>
<svg style="left:35.07px;top:315.15px" width="10" height="11" viewBox="0 0 10 11"><ellipse cx="5" cy="5.5" rx="4.1" ry="4.9" fill="url(#gball)" stroke="#c8c8d0" stroke-width=".5"/></svg>
<div class="t" style="left:47.97px;top:316.75px;font-size:8.5px;color:#151515;transform:scaleX(0.814);-webkit-text-stroke:.25px #151515">Last_section_number: 0</div>
<svg style="left:24.97px;top:331.30px" width="7" height="8" viewBox="0 0 7 8"><rect x="0.5" y="0.5" width="6" height="7" rx="1.5" fill="#fbfbf6" stroke="#a8a8a0" stroke-width="1"/><path d="M1.8 4 H5.2" stroke="#3a3a5a" stroke-width="1"/></svg>
<svg style="left:35.07px;top:329.30px" width="10" height="11" viewBox="0 0 10 11"><ellipse cx="5" cy="5.5" rx="4.1" ry="4.9" fill="url(#gball)" stroke="#c8c8d0" stroke-width=".5"/></svg>
<div class="t" style="left:47.97px;top:330.90px;font-size:8.5px;color:#151515;transform:scaleX(0.818);-webkit-text-stroke:.25px #151515">PMT_map_list &lt;2&gt;</div>
<svg style="left:46.94px;top:343.45px" width="10" height="11" viewBox="0 0 10 11"><ellipse cx="5" cy="5.5" rx="4.1" ry="4.9" fill="url(#gball)" stroke="#c8c8d0" stroke-width=".5"/></svg>
<div class="t" style="left:59.84px;top:345.05px;font-size:8.5px;color:#151515;transform:scaleX(0.773);-webkit-text-stroke:.25px #151515">PMT PID: 16, SID: 0</div>
<svg style="left:46.94px;top:357.61px" width="10" height="11" viewBox="0 0 10 11"><ellipse cx="5" cy="5.5" rx="4.1" ry="4.9" fill="url(#gball)" stroke="#c8c8d0" stroke-width=".5"/></svg>
<div class="t" style="left:59.84px;top:359.21px;font-size:8.5px;color:#151515;transform:scaleX(0.774);-webkit-text-stroke:.25px #151515">PMT PID: 2048, SID: 1</div>
<svg style="left:13.10px;top:373.76px" width="7" height="8" viewBox="0 0 7 8"><rect x="0.5" y="0.5" width="6" height="7" rx="1.5" fill="#fbfbf6" stroke="#a8a8a0" stroke-width="1"/><path d="M1.8 4 H5.2" stroke="#3a3a5a" stroke-width="1"/></svg>
<svg style="left:24.2px;top:372.06px" width="10" height="10" viewBox="0 0 10 10"><path d="M1 1.2 V2.2 M1 5 V6 M1 8.8 V9.8" stroke="#8090b8" stroke-width="1"/><path d="M3.8 1.2 H8.8 M3.8 5 H8.8 M3.8 8.8 H8.8" stroke="#1c1c28" stroke-width="1.1"/></svg>
<div class="t" style="left:36.10px;top:373.36px;font-size:8.5px;color:#151515;transform:scaleX(0.785);-webkit-text-stroke:.25px #151515">PMT PID X &lt;1&gt;</div>
<svg style="left:24.97px;top:387.91px" width="7" height="8" viewBox="0 0 7 8"><rect x="0.5" y="0.5" width="6" height="7" rx="1.5" fill="#fbfbf6" stroke="#a8a8a0" stroke-width="1"/><path d="M1.8 4 H5.2" stroke="#3a3a5a" stroke-width="1"/><path d="M3.5 2.2 V5.8" stroke="#3a3a5a" stroke-width="1"/></svg>
<svg style="left:35.07px;top:385.91px" width="10" height="11" viewBox="0 0 10 11"><ellipse cx="5" cy="5.5" rx="4.1" ry="4.9" fill="url(#gball)" stroke="#c8c8d0" stroke-width=".5"/></svg>
<div class="t" style="left:47.97px;top:387.51px;font-size:8.5px;color:#151515;transform:scaleX(0.77);-webkit-text-stroke:.25px #151515">PMT PID 2048, SID 1</div>
<svg style="left:13.10px;top:402.07px" width="7" height="8" viewBox="0 0 7 8"><rect x="0.5" y="0.5" width="6" height="7" rx="1.5" fill="#fbfbf6" stroke="#a8a8a0" stroke-width="1"/><path d="M1.8 4 H5.2" stroke="#3a3a5a" stroke-width="1"/></svg>
<svg style="left:24.7px;top:399.57px" width="8" height="12" viewBox="0 0 8 12"><path d="M1.6 5 V2.8 A1.7 1.7 0 0 1 5 2.8 V5" stroke="#6a6a70" stroke-width="1.2" fill="none"/><rect x="0.2" y="4.6" width="6.4" height="6.6" rx="1" fill="#ecc81a" stroke="#b89010" stroke-width=".5"/><rect x="0.8" y="7" width="5.2" height="1.6" fill="#f8e060"/></svg>
<div class="t" style="left:36.10px;top:401.67px;font-size:8.5px;color:#151515;transform:scaleX(0.747);-webkit-text-stroke:.25px #151515">CAT PID 1</div>
<svg style="left:35.07px;top:414.22px" width="10" height="11" viewBox="0 0 10 11"><ellipse cx="5" cy="5.5" rx="4.1" ry="4.9" fill="url(#gball)" stroke="#c8c8d0" stroke-width=".5"/></svg>
<div class="t" style="left:47.97px;top:415.82px;font-size:8.5px;color:#151515;transform:scaleX(0.845);-webkit-text-stroke:.25px #151515">Version_number: 0</div>
<svg style="left:35.07px;top:428.37px" width="10" height="11" viewBox="0 0 10 11"><ellipse cx="5" cy="5.5" rx="4.1" ry="4.9" fill="url(#gball)" stroke="#c8c8d0" stroke-width=".5"/></svg>
<div class="t" style="left:47.97px;top:429.97px;font-size:8.5px;color:#151515;transform:scaleX(0.814);-webkit-text-stroke:.25px #151515">Last_section_number: 0</div>
<svg style="left:13.10px;top:444.52px" width="7" height="8" viewBox="0 0 7 8"><rect x="0.5" y="0.5" width="6" height="7" rx="1.5" fill="#fbfbf6" stroke="#a8a8a0" stroke-width="1"/><path d="M1.8 4 H5.2" stroke="#3a3a5a" stroke-width="1"/></svg>
<svg style="left:23.2px;top:441.825px" width="11" height="12" viewBox="0 0 11 12"><rect x="0.5" y="0.5" width="8.5" height="10.5" fill="#f4f6fa" stroke="#7a8aa0" stroke-width=".8"/><path d="M2 3 H7.5 M2 5 H7.5 M2 7 H5" stroke="#8a9ab0" stroke-width=".6"/><path d="M7.8 5.5 L8.6 7.4 L10.6 7.5 L9.1 8.8 L9.6 10.8 L7.8 9.7 L6 10.8 L6.5 8.8 L5 7.5 L7 7.4 Z" fill="#f0b800" stroke="#c08a00" stroke-width=".3"/></svg>
<div class="t" style="left:36.10px;top:444.12px;font-size:8.5px;color:#151515;transform:scaleX(0.747);-webkit-text-stroke:.25px #151515">SDT PID 17</div>
<svg style="left:35.07px;top:456.68px" width="10" height="11" viewBox="0 0 10 11"><ellipse cx="5" cy="5.5" rx="4.1" ry="4.9" fill="url(#gball)" stroke="#c8c8d0" stroke-width=".5"/></svg>
<div class="t" style="left:47.97px;top:458.28px;font-size:8.5px;color:#151515;transform:scaleX(0.845);-webkit-text-stroke:.25px #151515">Version_number: 0</div>
<svg style="left:35.07px;top:470.83px" width="10" height="11" viewBox="0 0 10 11"><ellipse cx="5" cy="5.5" rx="4.1" ry="4.9" fill="url(#gball)" stroke="#c8c8d0" stroke-width=".5"/></svg>
<div class="t" style="left:47.97px;top:472.43px;font-size:8.5px;color:#151515;transform:scaleX(0.822);-webkit-text-stroke:.25px #151515">Transport_Stream ID: 0</div>
<svg style="left:35.07px;top:484.98px" width="10" height="11" viewBox="0 0 10 11"><ellipse cx="5" cy="5.5" rx="4.1" ry="4.9" fill="url(#gball)" stroke="#c8c8d0" stroke-width=".5"/></svg>
<div class="t" style="left:47.97px;top:486.58px;font-size:8.5px;color:#151515;transform:scaleX(0.859);-webkit-text-stroke:.25px #151515">Original_Network ID: 0</div>
<svg style="left:35.07px;top:499.14px" width="10" height="11" viewBox="0 0 10 11"><ellipse cx="5" cy="5.5" rx="4.1" ry="4.9" fill="url(#gball)" stroke="#c8c8d0" stroke-width=".5"/></svg>
<div class="t" style="left:47.97px;top:500.74px;font-size:8.5px;color:#151515;transform:scaleX(0.814);-webkit-text-stroke:.25px #151515">Last_section_number: 0</div>
<svg style="left:24.97px;top:515.29px" width="7" height="8" viewBox="0 0 7 8"><rect x="0.5" y="0.5" width="6" height="7" rx="1.5" fill="#fbfbf6" stroke="#a8a8a0" stroke-width="1"/><path d="M1.8 4 H5.2" stroke="#3a3a5a" stroke-width="1"/></svg>
<svg style="left:35.07px;top:513.29px" width="10" height="11" viewBox="0 0 10 11"><ellipse cx="5" cy="5.5" rx="4.1" ry="4.9" fill="url(#gball)" stroke="#c8c8d0" stroke-width=".5"/></svg>
<div class="t" style="left:47.97px;top:514.89px;font-size:8.5px;color:#151515;transform:scaleX(0.825);-webkit-text-stroke:.25px #151515">Service_descriptor &lt;1&gt;</div>
<svg style="left:36.84px;top:529.44px" width="7" height="8" viewBox="0 0 7 8"><rect x="0.5" y="0.5" width="6" height="7" rx="1.5" fill="#fbfbf6" stroke="#a8a8a0" stroke-width="1"/><path d="M1.8 4 H5.2" stroke="#3a3a5a" stroke-width="1"/></svg>
<svg style="left:46.94px;top:527.44px" width="10" height="11" viewBox="0 0 10 11"><ellipse cx="5" cy="5.5" rx="4.1" ry="4.9" fill="url(#gball)" stroke="#c8c8d0" stroke-width=".5"/></svg>
<div class="t" style="left:59.84px;top:529.04px;font-size:8.5px;color:#151515;transform:scaleX(0.782);-webkit-text-stroke:.25px #151515">SID: 1 FLY TDA ALCOM MAIN</div>
<svg style="left:58.81px;top:541.60px" width="10" height="11" viewBox="0 0 10 11"><ellipse cx="5" cy="5.5" rx="4.1" ry="4.9" fill="url(#gball)" stroke="#c8c8d0" stroke-width=".5"/></svg>
<div class="t" style="left:71.71px;top:543.20px;font-size:8.5px;color:#151515;transform:scaleX(0.833);-webkit-text-stroke:.25px #151515">Table_Id: 66</div>
<svg style="left:58.81px;top:555.75px" width="10" height="11" viewBox="0 0 10 11"><ellipse cx="5" cy="5.5" rx="4.1" ry="4.9" fill="url(#gball)" stroke="#c8c8d0" stroke-width=".5"/></svg>
<div class="t" style="left:71.71px;top:557.35px;font-size:8.5px;color:#151515;transform:scaleX(0.795);-webkit-text-stroke:.25px #151515">Name: FLY TDA ALCOM MAIN</div>
<svg style="left:58.81px;top:569.90px" width="10" height="11" viewBox="0 0 10 11"><ellipse cx="5" cy="5.5" rx="4.1" ry="4.9" fill="url(#gball)" stroke="#c8c8d0" stroke-width=".5"/></svg>
<div class="t" style="left:71.71px;top:571.50px;font-size:8.5px;color:#151515;transform:scaleX(0.821);-webkit-text-stroke:.25px #151515">Provider: TDA</div>
<svg style="left:58.81px;top:584.06px" width="10" height="11" viewBox="0 0 10 11"><ellipse cx="5" cy="5.5" rx="4.1" ry="4.9" fill="url(#gball)" stroke="#c8c8d0" stroke-width=".5"/></svg>
<div class="t" style="left:71.71px;top:585.65px;font-size:8.5px;color:#151515;transform:scaleX(0.879);-webkit-text-stroke:.25px #151515">Running status: undefined</div>
<svg style="left:58.81px;top:598.21px" width="10" height="11" viewBox="0 0 10 11"><ellipse cx="5" cy="5.5" rx="4.1" ry="4.9" fill="url(#gball)" stroke="#c8c8d0" stroke-width=".5"/></svg>
<div class="t" style="left:71.71px;top:599.81px;font-size:8.5px;color:#151515;transform:scaleX(0.809);-webkit-text-stroke:.25px #151515">Free CA Mode: False</div>
<div class="a" style="left:473px;top:48px;width:54px;height:54px;background:#fff;box-shadow:0 0 2px #fff"></div>
<svg style="left:473px;top:48px" width="54" height="56" viewBox="0 0 54 56">
<path d="M8.6 43.4 A23.75 23.75 0 0 1 42.3 11" stroke="#1e2a78" stroke-width="1.1" fill="none"/>
<path d="M44 13.3 A23.75 23.75 0 0 1 51 30.5" stroke="#1a237a" stroke-width="1.8" fill="none"/>
<path d="M50.7 32.6 A23.75 23.75 0 0 1 44.6 44.7" stroke="#1e2a78" stroke-width="1.1" fill="none"/>
<path d="M9.3 45 H44.4" stroke="#1e2a78" stroke-width="1.2"/>
<path d="M18.4 9.4 L31.6 42.5 M20.6 9.6 L33.6 42.3" stroke="#3a3a5a" stroke-width=".65" fill="none"/>
<path d="M20 20.8 L21.3 30.5 L19.8 32.6 M21.3 30.5 L30.8 41.8" stroke="#707898" stroke-width=".8" fill="none"/>
<path d="M27.4 26 L36.8 25.6 L32.3 29.8" stroke="#7a84a8" stroke-width=".8" fill="none"/>
<circle cx="16.4" cy="35" r="2.3" stroke="#8088b0" stroke-width=".9" fill="none"/>
<path d="M9.6 44.8 Q14 42 16.4 38 M17.7 40.8 L21.8 44.8" stroke="#283070" stroke-width="1" fill="none"/>
<path d="M42.3 15.9 Q46.3 21.5 47.5 29.2" stroke="#c41818" stroke-width="1.7" fill="none"/>
<path d="M39.7 18.8 Q42.8 23.2 43.6 28.2" stroke="#c41818" stroke-width="1.5" fill="none"/>
<text x="2.2" y="52.2" font-family="Liberation Sans" font-weight="bold" font-size="6.6" fill="#1e2470" textLength="50.5" lengthAdjust="spacingAndGlyphs"><tspan fill="#b82028">DX</tspan>SATCS.COM</text>
</svg>
<div class="a" style="left:399px;top:134.5px;width:614px;height:568.5px;border-radius:6px;box-shadow:0 10px 26px rgba(60,60,10,.30),0 0 0 1px rgba(120,120,100,.35)"></div>
<div class="a" style="left:399px;top:134.5px;width:614px;height:568.5px;border-radius:6px;background:#efefef;overflow:hidden">
<div class="a" style="left:0;top:0;width:614px;height:23px;background:#eeeef0"></div>
<div class="a" style="left:0;top:23px;width:614px;height:16.5px;background:#fdfdfd"></div>
<div class="a" style="left:0;top:39.5px;width:614px;height:488.0px;background:#000"></div>
<div class="a" style="left:0;top:527.5px;width:614px;height:41px;background:linear-gradient(#fafafa 0,#f0f0f0 2px,#ececec 12px,#eaeaea 60%,#ededef 100%)"></div>
</div>
<svg style="left:404.5px;top:139.5px" width="10" height="13" viewBox="0 0 10 13"><path d="M4.5 0.3 H5.5 L8.6 10.5 H1.4 Z" fill="#d85a10"/><path d="M3.6 3.6 H6.4 L7 5.6 H3 Z" fill="#e8e0d8"/><path d="M2.6 7.2 H7.4 L8 9.2 H2 Z" fill="#f0e8e0"/><rect x="0.3" y="10.3" width="9.4" height="2.2" fill="#e87a20"/></svg>
<div class="t" style="left:418px;top:142.2px;font-size:9.5px;color:#505050;transform:scaleX(.755)">FLY TDA ALCOM MAIN (TDA) - 12676 Horizontal 3999,62 / RF: -46 SNR: 10,5 | Alcomsat 1 @ TBS 5927 USB DVB-S2 Tuner - VLC media player</div>
<div class="a" style="left:939px;top:145.5px;width:6.5px;height:1px;background:#555"></div>
<div class="a" style="left:967px;top:141.5px;width:6.5px;height:8px;border:1px solid #555;border-radius:1px"></div>
<svg style="left:995px;top:141.5px" width="8" height="8" viewBox="0 0 8 8"><path d="M0.5 0.5 L7.5 7.5 M7.5 0.5 L0.5 7.5" stroke="#555" stroke-width=".9"/></svg>
<div class="t" style="left:402.8px;top:162.3px;font-size:9.5px;color:#8a8a8a;transform:scaleX(0.894)">Médium</div>
<div class="t" style="left:440.8px;top:162.3px;font-size:9.5px;color:#8a8a8a;transform:scaleX(0.79)">Prehrávanie</div>
<div class="t" style="left:491.4px;top:162.3px;font-size:9.5px;color:#8a8a8a;transform:scaleX(0.814)">Zvuk</div>
<div class="t" style="left:517.6px;top:162.3px;font-size:9.5px;color:#8a8a8a;transform:scaleX(0.769)">Video</div>
<div class="t" style="left:546.4px;top:162.3px;font-size:9.5px;color:#8a8a8a;transform:scaleX(0.828)">Titulky</div>
<div class="t" style="left:576.6px;top:162.3px;font-size:9.5px;color:#8a8a8a;transform:scaleX(0.822)">Nástroje</div>
<div class="t" style="left:615.0px;top:162.3px;font-size:9.5px;color:#8a8a8a;transform:scaleX(0.815)">Zobraziť</div>
<div class="t" style="left:652.0px;top:162.3px;font-size:9.5px;color:#8a8a8a;transform:scaleX(0.849)">Pomocník</div>
<svg style="left:670px;top:367px" width="72" height="100" viewBox="0 0 72 100">
<defs>
<linearGradient id="cg" x1="0" x2="1"><stop offset="0" stop-color="#b84000"/><stop offset=".3" stop-color="#f87818"/><stop offset=".55" stop-color="#ff8a28"/><stop offset="1" stop-color="#b83c00"/></linearGradient>
<linearGradient id="wg" x1="0" x2="1"><stop offset="0" stop-color="#9ea2a8"/><stop offset=".3" stop-color="#e4e6ea"/><stop offset=".6" stop-color="#d4d6da"/><stop offset="1" stop-color="#9a9ea4"/></linearGradient>
<linearGradient id="bg" x1="0" y1="0" x2="0" y2="1"><stop offset="0" stop-color="#f87a10"/><stop offset=".7" stop-color="#ff9420"/><stop offset="1" stop-color="#ffa838"/></linearGradient>
</defs>
<path d="M2 97.9 L9.2 63.5 H61.7 L70 97.9 Z" fill="url(#bg)"/>
<path d="M2 96.5 H70 L70 98.5 H2 Z" fill="#ffb848" opacity=".8"/>
<ellipse cx="36.1" cy="86" rx="25" ry="8" fill="#e06200" opacity=".75"/>
<path d="M32 2.5 Q36.1 0.8 40.3 2.5 L58 83 Q36.1 95 14.2 83 Z" fill="url(#cg)"/>
<path d="M28.9 16.3 Q36.1 18 43.3 16.3 L47.5 35 Q36.1 38 24.7 35 Z" fill="url(#wg)"/>
<path d="M20.9 52.5 Q36.1 56.5 51.3 52.5 L56.5 75.8 Q36.1 80.5 15.7 75.8 Z" fill="url(#wg)"/>
</svg>
<div class="a" style="left:431px;top:664.7px;width:550px;height:7px;border-radius:3.5px;background:linear-gradient(#a6a6a6,#c4c4c4 70%,#cacaca)"></div>
<div class="t" style="left:403px;top:665.5px;font-size:9px;font-weight:bold;color:#111;transform:scaleX(.78);-webkit-text-stroke:.2px #111">03:34</div>
<div class="t" style="left:990px;top:665.5px;font-size:9px;font-weight:bold;color:#111;transform:scaleX(.78);-webkit-text-stroke:.2px #111">00:00</div>
<div class="a" style="left:402.5px;top:678px;width:17.5px;height:22px;background:#fafafa;border:1px solid #d8d8d8;border-radius:3px;box-shadow:0 1px 0 #c8c8c8"></div><div class="a" style="left:406.5px;top:683px;width:3px;height:13px;background:#555"></div><div class="a" style="left:412.5px;top:683px;width:3px;height:13px;background:#555"></div>
<div class="a" style="left:430px;top:680.5px;width:13.5px;height:17.5px;background:#fafafa;border:1px solid #d8d8d8;border-radius:2.5px;box-shadow:0 1px 0 #c8c8c8"></div><svg style="left:430.8px;top:683.3px" width="12" height="12" viewBox="0 0 12 12"><path d="M2 2.5 V9.5" stroke="#505050" stroke-width="1.6"/><path d="M2.8 6 L6.2 2.8 V9.2 Z M6 6 L9.6 2.8 V9.2 Z" fill="#505050"/></svg>
<div class="a" style="left:446.5px;top:680.5px;width:13.5px;height:17.5px;background:#fafafa;border:1px solid #d8d8d8;border-radius:2.5px;box-shadow:0 1px 0 #c8c8c8"></div><svg style="left:447.3px;top:683.3px" width="12" height="12" viewBox="0 0 12 12"><rect x="3.3" y="2.6" width="5.4" height="6.8" fill="#505050"/></svg>
<div class="a" style="left:462.5px;top:680.5px;width:13.5px;height:17.5px;background:#fafafa;border:1px solid #d8d8d8;border-radius:2.5px;box-shadow:0 1px 0 #c8c8c8"></div><svg style="left:463.3px;top:683.3px" width="12" height="12" viewBox="0 0 12 12"><path d="M10 2.5 V9.5" stroke="#505050" stroke-width="1.6"/><path d="M9.2 6 L5.8 2.8 V9.2 Z M6 6 L2.4 2.8 V9.2 Z" fill="#505050"/></svg>
<div class="a" style="left:486.5px;top:680.5px;width:13.5px;height:17.5px;background:#fafafa;border:1px solid #d8d8d8;border-radius:2.5px;box-shadow:0 1px 0 #c8c8c8"></div><svg style="left:487.3px;top:683.3px" width="12" height="12" viewBox="0 0 12 12"><path d="M2 4.5 V2 H4.5 M7.5 2 H10 V4.5 M10 7.5 V10 H7.5 M4.5 10 H2 V7.5" stroke="#707070" stroke-width="1.3" fill="none"/></svg>
<div class="a" style="left:503px;top:680.5px;width:13.5px;height:17.5px;background:#fafafa;border:1px solid #d8d8d8;border-radius:2.5px;box-shadow:0 1px 0 #c8c8c8"></div><svg style="left:503.8px;top:683.3px" width="12" height="12" viewBox="0 0 12 12"><path d="M3 3 V10.5 M6 1.5 V10.5 M9 1.5 V9" stroke="#505050" stroke-width="1.3"/><path d="M1.4 4 L3 1.3 L4.6 4 Z M7.4 8 L9 10.7 L10.6 8 Z" fill="#505050"/><path d="M4.6 6.5 H7.4" stroke="#505050" stroke-width="1.6"/></svg>
<div class="a" style="left:526.5px;top:680.5px;width:13.5px;height:17.5px;background:#fafafa;border:1px solid #d8d8d8;border-radius:2.5px;box-shadow:0 1px 0 #c8c8c8"></div><svg style="left:527.3px;top:683.3px" width="12" height="12" viewBox="0 0 12 12"><path d="M1.5 2.5 H10.5 M1.5 5.5 H10.5 M1.5 8.5 H7.5" stroke="#505050" stroke-width="1.4"/><path d="M8.5 7 L11 8.5 L8.5 10 Z" fill="#505050"/></svg>
<div class="a" style="left:542.5px;top:680.5px;width:13.5px;height:17.5px;background:#fafafa;border:1px solid #d8d8d8;border-radius:2.5px;box-shadow:0 1px 0 #c8c8c8"></div><svg style="left:543.3px;top:683.3px" width="12" height="12" viewBox="0 0 12 12"><path d="M2.5 7 V4.8 Q2.5 3.2 4.2 3.2 H8.5 M9.5 5 V7.2 Q9.5 8.8 7.8 8.8 H3.5" stroke="#505050" stroke-width="1.4" fill="none"/><path d="M8 1.2 L10.4 3.2 L8 5.2 Z M4 6.8 L1.6 8.8 L4 10.8 Z" fill="#505050"/></svg>
<div class="a" style="left:559px;top:680.5px;width:13.5px;height:17.5px;background:#fafafa;border:1px solid #d8d8d8;border-radius:2.5px;box-shadow:0 1px 0 #c8c8c8"></div><svg style="left:559.8px;top:683.3px" width="12" height="12" viewBox="0 0 12 12"><path d="M1.8 2.2 L9.5 9.5 M1.8 9.8 L5 6.8 M7 5 L9.5 2.5" stroke="#505050" stroke-width="1.4" fill="none"/><path d="M7 1.5 H10.5 V5 Z M10.5 7 V10.5 H7 Z" fill="#505050"/></svg>
<svg style="left:941px;top:689px" width="11" height="11" viewBox="0 0 11 11"><path d="M1 4 H3 L6 1 V10 L3 7 H1 Z" fill="#555"/><path d="M7 2.5 Q9.5 5.5 7 8.5" stroke="#f0a040" stroke-width="1.3" fill="none"/></svg>
<div class="t" style="left:960px;top:683.8px;font-size:8px;color:#3a3a3a;transform:scaleX(.76)">99%</div>
<svg style="left:954px;top:682px" width="50" height="19" viewBox="0 0 50 19"><defs><linearGradient id="vg" x1="0" x2="1"><stop offset="0" stop-color="#60c860"/><stop offset="1" stop-color="#10c010"/></linearGradient></defs><path d="M1.5 17.3 L46.7 1.3 V17.3 Z" fill="#ececec"/><path d="M1.5 17.3 L38 4.4 V17.3 Z" fill="url(#vg)"/><path d="M1.5 17.3 L46.7 1.3 V17.3 Z" fill="none" stroke="#666" stroke-width="1.4" stroke-linejoin="round"/></svg>
<svg style="left:1004px;top:692px" width="8" height="8" viewBox="0 0 8 8"><path d="M6 2 V3 M4 4 V5 M6 4 V5 M2 6 V7 M4 6 V7 M6 6 V7" stroke="#aaa" stroke-width="1"/></svg>
</body></html>
